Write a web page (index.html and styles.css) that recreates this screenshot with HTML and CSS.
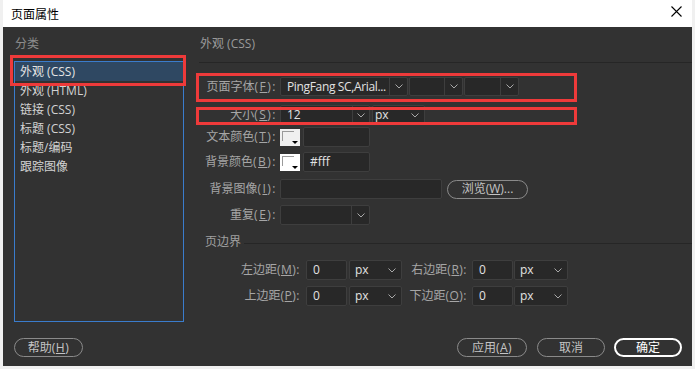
FILE: index.html
```html
<!DOCTYPE html>
<html lang="zh-CN">
<head>
<meta charset="utf-8">
<title>页面属性</title>
<link rel="stylesheet" href="styles.css">
</head>
<body>
<div class="window">
  <div class="titlebar">
    <span class="title">页面属性</span>
    <svg class="close" width="11" height="11" viewBox="0 0 11 11"><path d="M0.5 0.5 L10.5 10.5 M10.5 0.5 L0.5 10.5" stroke="#000" stroke-width="1.1" fill="none"/></svg>
  </div>
  <div class="content">
    <div class="main">
      <div class="sidebar">
        <div class="side-title">分类</div>
        <ul class="list">
          <li class="item selected">外观 (CSS)</li>
          <li class="item">外观 (HTML)</li>
          <li class="item">链接 (CSS)</li>
          <li class="item">标题 (CSS)</li>
          <li class="item">标题/编码</li>
          <li class="item">跟踪图像</li>
        </ul>
      </div>
      <div class="panel">
        <div class="panel-title">外观 (CSS)</div>

        <div class="row row1">
          <span class="lbl">页面字体<span class="mn">(<u>F</u>):</span></span>
          <div class="combo w128"><span class="val font">PingFang SC,Arial...</span><span class="arr"><svg width="8" height="5" viewBox="0 0 8 5"><polyline points="0.5,0.5 4,4 7.5,0.5" fill="none" stroke="#a8a8a8" stroke-width="1"/></svg></span></div>
          <div class="combo w54 ml1"><span class="val"></span><span class="arr"><svg width="8" height="5" viewBox="0 0 8 5"><polyline points="0.5,0.5 4,4 7.5,0.5" fill="none" stroke="#a8a8a8" stroke-width="1"/></svg></span></div>
          <div class="combo w55 ml1"><span class="val"></span><span class="arr"><svg width="8" height="5" viewBox="0 0 8 5"><polyline points="0.5,0.5 4,4 7.5,0.5" fill="none" stroke="#a8a8a8" stroke-width="1"/></svg></span></div>
        </div>

        <div class="row row2">
          <span class="lbl">大小<span class="mn">(<u>S</u>):</span></span>
          <div class="combo w90"><span class="val">12</span><span class="arr a17"><svg width="8" height="5" viewBox="0 0 8 5"><polyline points="0.5,0.5 4,4 7.5,0.5" fill="none" stroke="#a8a8a8" stroke-width="1"/></svg></span></div>
          <div class="select w53 ml2 unit"><span class="val">px</span><svg width="8" height="5" viewBox="0 0 8 5"><polyline points="0.5,0.5 4,4 7.5,0.5" fill="none" stroke="#a8a8a8" stroke-width="1"/></svg></div>
        </div>

        <div class="row row3">
          <span class="lbl">文本颜色<span class="mn">(<u>T</u>):</span></span>
          <div class="swatch gray"><span class="edge"></span><span class="tri"></span></div>
          <div class="input w67"></div>
        </div>

        <div class="row row4">
          <span class="lbl">背景颜色<span class="mn">(<u>B</u>):</span></span>
          <div class="swatch"><span class="edge"></span><span class="tri"></span></div>
          <div class="input w67"><span class="val">#fff</span></div>
        </div>

        <div class="row row5">
          <span class="lbl">背景图像<span class="mn">(<u>I</u>):</span></span>
          <div class="input w162"></div>
          <button class="btn browse">浏览(<u>W</u>)...</button>
        </div>

        <div class="row row6">
          <span class="lbl">重复<span class="mn">(<u>E</u>):</span></span>
          <div class="combo w90"><span class="val"></span><span class="arr"><svg width="8" height="5" viewBox="0 0 8 5"><polyline points="0.5,0.5 4,4 7.5,0.5" fill="none" stroke="#a8a8a8" stroke-width="1"/></svg></span></div>
        </div>

        <div class="section"><span>页边界</span><span class="rule"></span></div>

        <div class="row mrow mrow1">
          <span class="mlbl l1">左边距<span class="mn2">(<u>M</u>):</span></span>
          <div class="input w41"><span class="val">0</span></div>
          <div class="select w53 ml2"><span class="val">px</span><svg width="8" height="5" viewBox="0 0 8 5"><polyline points="0.5,0.5 4,4 7.5,0.5" fill="none" stroke="#a8a8a8" stroke-width="1"/></svg></div>
          <span class="mlbl l2">右边距<span class="mn2">(<u>R</u>):</span></span>
          <div class="input w41"><span class="val">0</span></div>
          <div class="select w54 ml1"><span class="val">px</span><svg width="8" height="5" viewBox="0 0 8 5"><polyline points="0.5,0.5 4,4 7.5,0.5" fill="none" stroke="#a8a8a8" stroke-width="1"/></svg></div>
        </div>

        <div class="row mrow mrow2">
          <span class="mlbl l1">上边距<span class="mn2">(<u>P</u>):</span></span>
          <div class="input w41"><span class="val">0</span></div>
          <div class="select w53 ml2"><span class="val">px</span><svg width="8" height="5" viewBox="0 0 8 5"><polyline points="0.5,0.5 4,4 7.5,0.5" fill="none" stroke="#a8a8a8" stroke-width="1"/></svg></div>
          <span class="mlbl l2">下边距<span class="mn2">(<u>O</u>):</span></span>
          <div class="input w41"><span class="val">0</span></div>
          <div class="select w54 ml1"><span class="val">px</span><svg width="8" height="5" viewBox="0 0 8 5"><polyline points="0.5,0.5 4,4 7.5,0.5" fill="none" stroke="#a8a8a8" stroke-width="1"/></svg></div>
        </div>
      </div>
    </div>

    <div class="footer">
      <button class="btn help">帮助<span class="mn2">(<u>H</u>)</span></button>
      <span class="spacer"></span>
      <button class="btn apply">应用<span class="mn2">(<u>A</u>)</span></button>
      <button class="btn cancel">取消</button>
      <button class="btn ok">确定</button>
    </div>

    <div class="hl hl-side"></div>
    <div class="hl hl-font"></div>
    <div class="hl hl-size"></div>
  </div>
</div>
</body>
</html>
```

FILE: styles.css
```css
* { box-sizing: border-box; }

html, body {
  margin: 0;
  padding: 0;
}

body {
  background: #f0f0f0;
  font-family: "Open Sans", "Noto Sans CJK SC", sans-serif;
  font-size: 12px;
  width: 695px;
  height: 369px;
  overflow: hidden;
}

.window {
  margin-left: 3px;
  width: 689px;
  height: 366px;
  display: flex;
  flex-direction: column;
}

.titlebar {
  height: 27px;
  background: #ffffff;
  display: flex;
  align-items: center;
  padding-left: 8px;
  flex: none;
}

.title {
  color: #000;
  font-size: 12px;
  line-height: 14px;
  font-family: "Noto Sans CJK SC", sans-serif;
}

.close {
  margin-left: auto;
  margin-right: 10px;
  margin-top: -4px;
}

.content {
  position: relative;
  flex: 1;
  background: #323232;
  display: flex;
  flex-direction: column;
}

.main {
  display: flex;
  height: 295px;
}

.sidebar {
  margin-left: 11px;
  width: 170px;
  display: flex;
  flex-direction: column;
}

.side-title {
  height: 34px;
  padding-top: 10px;
  padding-left: 1px;
  line-height: 14px;
  color: #8c8c8c;
}

.list {
  list-style: none;
  margin: 0;
  padding: 0;
  border: 1px solid #3a7ccc;
  height: 261px;
}

.item {
  height: 19px;
  line-height: 19px;
  padding-left: 5px;
  color: #d2d2d2;
}

.item.selected {
  background: #2f4862;
  color: #e4e4e4;
}

.panel {
  margin-left: 15px;
  flex: 1;
  display: flex;
  flex-direction: column;
}

.panel-title {
  padding: 10px 0 11px 1px;
  line-height: 14px;
  color: #9a9a9a;
  border-bottom: 1px solid #262626;
}

.row {
  display: flex;
  align-items: center;
  height: 20px;
  flex: none;
}

.row1 { margin-top: 14px; height: 19px; }
.row2 { margin-top: 9px; }
.row3 { margin-top: 2px; }
.row4 { margin-top: 5px; }
.row5 { margin-top: 7px; }
.row6 { margin-top: 6px; }

.lbl {
  width: 78px;
  margin-right: 3px;
  text-align: right;
  color: #a6a6a6;
  line-height: 20px;
  white-space: nowrap;
}

.mn { letter-spacing: 1.5px; }
.mn2 { letter-spacing: 0.5px; }

u { text-decoration: underline; text-underline-offset: 1px; }

.combo, .select, .input {
  height: 100%;
  border: 1px solid #3e3e3e;
  border-radius: 2px;
  background: #282828;
  display: flex;
  align-items: center;
  color: #e2e2e2;
  flex: none;
}

.combo .val {
  flex: 1;
  padding-left: 6px;
  white-space: nowrap;
  overflow: hidden;
  line-height: 18px;
}

.combo .val.font {
  letter-spacing: -0.35px;
  padding-left: 6px;
}

.combo .arr {
  width: 18px;
  height: 100%;
  border-left: 1px solid #3e3e3e;
  display: flex;
  align-items: center;
  justify-content: center;
  flex: none;
}

.combo .arr.a17 { width: 17px; }

.select {
  justify-content: space-between;
  padding: 0 5px 0 5px;
}

.select.unit { padding-left: 2px; }

.select .val, .input .val {
  line-height: 18px;
}

.input .val { padding-left: 6px; }

.w128 { width: 128px; }
.w54 { width: 54px; }
.w55 { width: 55px; }
.w90 { width: 90px; }
.w53 { width: 53px; }
.w67 { width: 67px; }
.w162 { width: 162px; }
.w41 { width: 41px; }
.ml1 { margin-left: 1px; }
.ml2 { margin-left: 2px; }

.swatch {
  position: relative;
  width: 20px;
  height: 17px;
  background: #ffffff;
  margin-right: 3px;
  flex: none;
}

.swatch.gray { background: #f0f0f0; }

.swatch .edge {
  position: absolute;
  left: 2px;
  top: 2px;
  width: 12px;
  height: 10px;
  border-left: 1px solid #9a9a9a;
  border-top: 1px solid #9a9a9a;
}

.swatch .tri {
  position: absolute;
  right: 2px;
  bottom: 2px;
  width: 0;
  height: 0;
  border-left: 3px solid transparent;
  border-right: 3px solid transparent;
  border-top: 3px solid #000;
}

.btn {
  font-family: "Open Sans", "Noto Sans CJK SC", sans-serif;
  font-size: 12px;
  height: 19px;
  padding: 0;
  border: 1px solid #8a8a8a;
  border-radius: 10px;
  background: transparent;
  color: #c4c4c4;
  line-height: 16px;
  text-align: center;
}

.browse {
  width: 81px;
  margin-left: 5px;
}

.section {
  display: flex;
  align-items: center;
  margin-top: 10px;
  padding-left: 6px;
  line-height: 14px;
  color: #a0a0a0;
}

.section .rule {
  flex: 1;
  height: 1px;
  background: #262626;
  margin-left: 3px;
  margin-top: 2px;
}

.mrow1 { margin-top: 11px; }
.mrow2 { margin-top: 6px; }

.mlbl {
  text-align: right;
  color: #a6a6a6;
  white-space: nowrap;
  line-height: 20px;
}

.mlbl.l1 { width: 101px; margin-right: 6px; }
.mlbl.l2 { width: 65px; margin-right: 5px; }

.footer {
  display: flex;
  align-items: center;
  margin-top: 16px;
  padding: 0 10px 0 11px;
}

.spacer { flex: 1; }

.help { width: 69px; }
.apply { width: 70px; margin-right: 10px; }
.cancel { width: 68px; margin-right: 9px; }
.ok {
  width: 68px;
  border: 2px solid #ffffff;
  color: #ffffff;
  line-height: 15px;
}

.hl {
  position: absolute;
  border: 3px solid #ee3a3a;
  pointer-events: none;
}

.hl-side { left: 7px; top: 28px; width: 176px; height: 31px; }
.hl-font { left: 193px; top: 46px; width: 381px; height: 29px; }
.hl-size { left: 193px; top: 80px; width: 381px; height: 18px; }
```
